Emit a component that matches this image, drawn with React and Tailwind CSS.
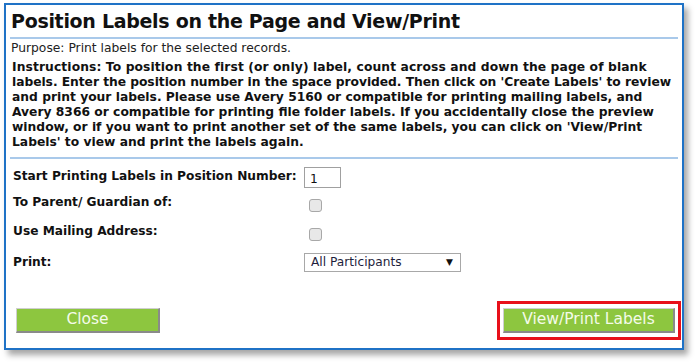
export default function App() {
  return (
    <div className="w-[696px] h-[364px] bg-white pt-[3px] pl-[4px]" style={{ fontFamily: '"DejaVu Sans", Verdana, sans-serif' }}>
      <div className="w-[680px] h-[347px] border-2 border-[#1f72c6] bg-white shadow-[4px_5px_6px_rgba(0,0,0,0.35)] flex flex-col pl-[4px] pr-[1px]">
        {/* Header */}
        <div className="h-[34px] border-b-2 border-[#a9c9ea] mr-[3px] flex items-end pb-[2px] pl-[1px]">
          <h1 className="text-[19px] font-bold text-[#111] leading-[28px] tracking-[-0.3px] whitespace-nowrap">
            Position Labels on the Page and View/Print
          </h1>
        </div>
        <p className="text-[12.3px] text-[#222] leading-[15px] mt-[2px] pl-[1px] whitespace-nowrap">Purpose: Print labels for the selected records.</p>
        <div className="text-[12.3px] font-bold text-[#111] leading-[15px] mt-[4px] pb-[7px] pl-[2px] mr-[3px] border-b-2 border-[#a9c9ea] whitespace-nowrap">
          <p className="tracking-[0.1px]">Instructions: To position the first (or only) label, count across and down the page of blank</p>
          <p className="tracking-[-0.05px]">labels. Enter the position number in the space provided. Then click on 'Create Labels' to review</p>
          <p>and print your labels. Please use Avery 5160 or compatible for printing mailing labels, and</p>
          <p>Avery 8366 or compatible for printing file folder labels. If you accidentally close the preview</p>
          <p>window, or if you want to print another set of the same labels, you can click on 'View/Print</p>
          <p>Labels' to view and print the labels again.</p>
        </div>

        {/* Form */}
        <div className="flex flex-col pl-[3px] pt-[7px] text-[12.2px] font-bold text-[#111] whitespace-nowrap">
          <div className="flex items-center h-[22px]">
            <span className="w-[291px] -mt-[2px]">Start Printing Labels in Position Number:</span>
            <div className="w-[37px] h-[21px] border border-[#a0a0a0] font-normal pl-[5px] pt-[4px] leading-[14px]">1</div>
          </div>
          <div className="flex items-center h-[29px]">
            <span className="w-[296px]">To Parent/ Guardian of:</span>
            <div className="w-[13px] h-[13px] border border-[#a8a8a8] rounded-[3px] bg-[#e8e8e8] mt-[6px]"></div>
          </div>
          <div className="flex items-center h-[29px]">
            <span className="w-[296px]">Use Mailing Address:</span>
            <div className="w-[13px] h-[13px] border border-[#a8a8a8] rounded-[3px] bg-[#e8e8e8] mt-[5px]"></div>
          </div>
          <div className="flex items-center h-[33px]">
            <span className="w-[291px]">Print:</span>
            <div className="w-[157px] h-[19px] border border-[#a8a8a8] flex items-center justify-between pl-[6px] pr-[7px] font-normal text-[#1e1e3c]">
              <span>All Participants</span>
              <span className="text-[9px] text-[#111]">▼</span>
            </div>
          </div>
        </div>

        {/* Buttons */}
        <div className="flex justify-between items-center mt-auto mb-[8px] pl-[6px]">
          <button className="w-[144px] h-[25px] bg-[#8dc63f] border border-[#cfcfcf] border-r-[#8a8a8a] border-b-[#8a8a8a] border-r-2 border-b-2 text-[15.5px] text-[#f4fbe9] leading-none">
            Close
          </button>
          <div className="border-[3px] border-[#e8101a] pt-[3px] pb-[4px] pl-[3px] pr-[3px]">
            <button className="w-[172px] h-[25px] bg-[#8dc63f] border border-[#cfcfcf] border-r-[#8a8a8a] border-b-[#8a8a8a] border-r-2 border-b-2 text-[15.5px] text-[#f4fbe9] leading-none">
              View/Print Labels
            </button>
          </div>
        </div>
      </div>
    </div>
  );
}
